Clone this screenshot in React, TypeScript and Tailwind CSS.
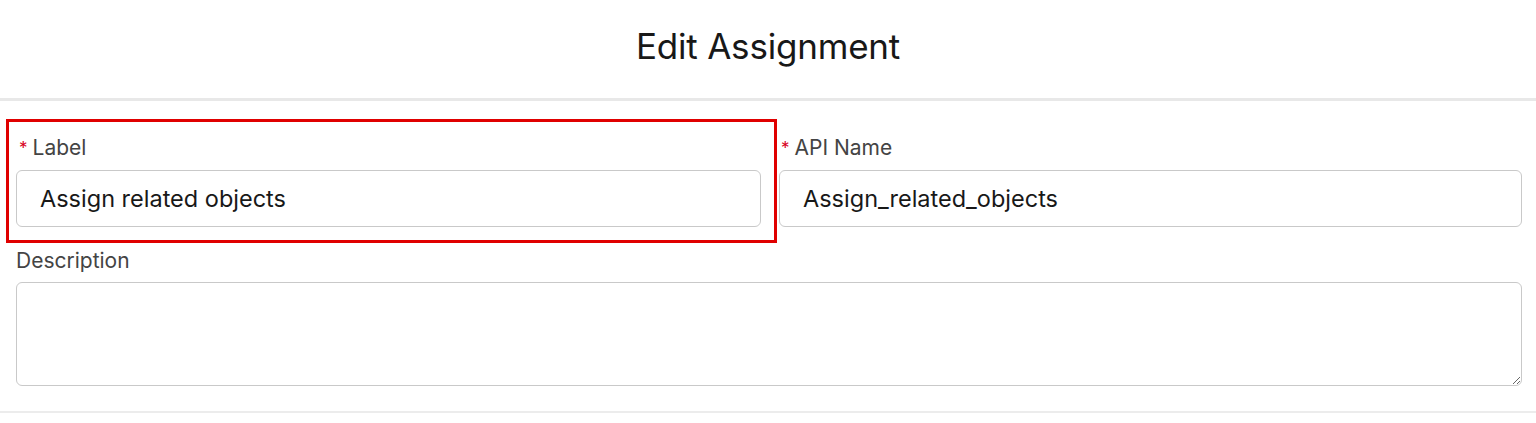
import { useState } from 'react';

const font = { fontFamily: 'Inter, "Noto Sans", Arial, sans-serif' };

function Field({
  label,
  value,
  onChange,
  required,
  starOffset = 'ml-[3px]',
}: {
  label: string;
  value: string;
  onChange: (v: string) => void;
  required?: boolean;
  starOffset?: string;
}) {
  return (
    <div>
      <label className="mt-[14px] flex h-[24px] items-center text-[21px] leading-[24px] text-[#444444]">
        {required && (
          <abbr className={`${starOffset} mr-[5px] text-[17px] text-[#d8001c] no-underline`} title="required">
            *
          </abbr>
        )}
        {label}
      </label>
      <input
        type="text"
        value={value}
        onChange={(e) => onChange(e.target.value)}
        className="mt-[10px] block h-[57px] w-full rounded-[6px] border border-[#c9c9c9] bg-white px-[23px] text-[23.5px] text-[#181818] outline-none"
      />
    </div>
  );
}

export default function App() {
  const [label, setLabel] = useState('Assign related objects');
  const [apiName, setApiName] = useState('Assign_related_objects');
  const [description, setDescription] = useState('');

  return (
    <div className="min-h-[423px] bg-white" style={font}>
      {/* Header */}
      <div className="flex h-[101px] items-center justify-center border-b-[3px] border-[#e8e8e8] pb-[6px]">
        <h1 className="text-[35px] font-normal tracking-[-0.2px] text-[#181818]">Edit Assignment</h1>
      </div>

      {/* Body */}
      <div className="border-b-2 border-[#ececec] pt-[18px] pb-[25px]">
        <div className="flex">
          <div className="ml-[6px] w-[771px] border-[3px] border-[#e00000] pr-[13px] pb-[13px] pl-[7px]">
            <Field label="Label" value={label} onChange={setLabel} required />
          </div>
          <div className="mr-[14px] ml-[2px] flex-1 pt-[3px]">
            <Field label="API Name" value={apiName} onChange={setApiName} required starOffset="ml-[2px]" />
          </div>
        </div>

        <div className="mt-[6px] pr-[14px] pl-[16px]">
          <label className="block text-[21px] leading-[24px] text-[#444444]">Description</label>
          <textarea
            value={description}
            onChange={(e) => setDescription(e.target.value)}
            className="mt-[9px] block h-[104px] w-full rounded-[6px] border border-[#c9c9c9] bg-white px-[23px] py-[10px] text-[23.5px] text-[#181818] outline-none"
          />
        </div>
      </div>
    </div>
  );
}
